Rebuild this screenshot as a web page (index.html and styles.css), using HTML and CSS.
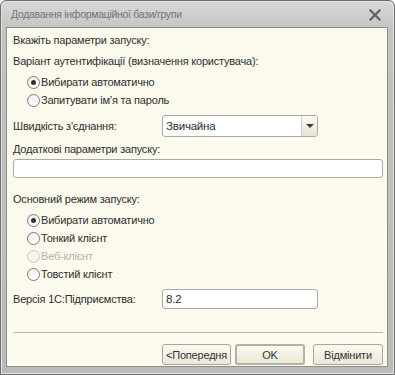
FILE: index.html
```html
<!DOCTYPE html>
<html lang="uk">
<head>
  <meta charset="UTF-8">
  <title>Додавання інформаційної бази/групи</title>
  <link rel="stylesheet" href="styles.css">
</head>
<body>

  <div class="window">
    <div class="title-bar">
      <span class="title">Додавання інформаційної бази/групи</span>
      <svg class="close" width="12" height="12" viewBox="0 0 12 12">
        <path d="M1.5 1.5 L10.5 10.5 M10.5 1.5 L1.5 10.5" stroke="#606060" stroke-width="2.2" stroke-linecap="square"/>
      </svg>
    </div>

    <div class="content">
      <div class="line hint">Вкажіть параметри запуску:</div>
      <div class="line auth-label">Варіант аутентифікації (визначення користувача):</div>

      <label class="radio first"><span class="dot checked"></span>Вибирати автоматично</label>
      <label class="radio"><span class="dot"></span>Запитувати ім’я та пароль</label>

      <div class="field speed">
        <span class="field-label">Швидкість з'єднання:</span>
        <div class="select">
          <span class="select-value">Звичайна</span>
          <span class="select-btn"><span class="arrow"></span></span>
        </div>
      </div>

      <div class="line extra-label">Додаткові параметри запуску:</div>
      <div class="input wide"></div>

      <div class="line mode-label">Основний режим запуску:</div>
      <label class="radio first"><span class="dot checked"></span>Вибирати автоматично</label>
      <label class="radio"><span class="dot"></span>Тонкий клієнт</label>
      <label class="radio disabled"><span class="dot"></span>Веб-клієнт</label>
      <label class="radio"><span class="dot"></span>Товстий клієнт</label>

      <div class="field version">
        <span class="field-label">Версія 1С:Підприємства:</span>
        <div class="input short">8.2</div>
      </div>

      <div class="separator"></div>

      <div class="buttons">
        <button class="btn prev">&lt;Попередня</button>
        <button class="btn ok">OK</button>
        <button class="btn cancel">Відмінити</button>
      </div>
    </div>
  </div>

</body>
</html>
```

FILE: styles.css
```css
body {
  margin: 0;
  width: 395px;
  height: 375px;
  overflow: hidden;
  background-color: #ffffff;
  font-family: "Liberation Sans", Arial, sans-serif;
  font-size: 11px;
  letter-spacing: -0.2px;
  color: #2e2e2e;
}

.window {
  box-sizing: border-box;
  width: 395px;
  height: 375px;
  display: flex;
  flex-direction: column;
  padding: 0 6px 7px 5px;
  border: 1px solid #6e6e6e;
  border-radius: 6px 6px 0 0;
  background: linear-gradient(#d9d9d9, #c2c2c2 30px, #bababa);
  box-shadow: inset 0 0 0 1px #e4e4e4;
}

.title-bar {
  height: 26px;
  display: flex;
  align-items: center;
  justify-content: space-between;
  padding: 0 7px 0 5px;
  flex-shrink: 0;
}

.title {
  font-size: 10.5px;
  letter-spacing: -0.3px;
  color: #747474;
}

.close {
  margin-top: 1px;
}

.content {
  flex: 1;
  display: flex;
  flex-direction: column;
  padding: 0 5px 0 6px;
  background-color: #fcfaec;
  border: 1px solid #8e8e8e;
}

.line {
  height: 18px;
  line-height: 18px;
  white-space: nowrap;
}

.hint {
  margin-top: 3px;
}

.auth-label {
  margin-top: 3px;
}

.radio {
  display: flex;
  align-items: center;
  height: 18px;
  padding-left: 14px;
  white-space: nowrap;
}

.radio.first {
  margin-top: 3px;
}

.radio.disabled {
  color: #b3b3b3;
}

.dot {
  position: relative;
  box-sizing: border-box;
  width: 13px;
  height: 13px;
  margin-right: 1px;
  border: 1px solid #7a7a7a;
  border-radius: 50%;
  background: linear-gradient(135deg, #e8e8e8, #ffffff 70%);
}

.radio.disabled .dot {
  border-color: #cccccc;
  background: #f6f4e8;
}

.dot.checked::after {
  content: "";
  position: absolute;
  left: 3px;
  top: 3px;
  width: 5px;
  height: 5px;
  border-radius: 50%;
  background-color: #333333;
}

.field {
  display: flex;
  align-items: center;
}

.field-label {
  width: 149px;
  flex-shrink: 0;
  white-space: nowrap;
}

.speed {
  margin-top: 6px;
  height: 22px;
}

.select {
  box-sizing: border-box;
  width: 156px;
  height: 22px;
  display: flex;
  border: 1px solid #a9a9a9;
  border-radius: 3px;
  background-color: #ffffff;
}

.select-value {
  flex: 1;
  padding-left: 3px;
  line-height: 20px;
  font-size: 11.5px;
}

.select-btn {
  width: 15px;
  display: flex;
  align-items: center;
  justify-content: center;
  border-left: 1px solid #cfcfcf;
  border-radius: 0 2px 2px 0;
  background: linear-gradient(#fbfaf3, #e7e4d6);
}

.arrow {
  width: 0;
  height: 0;
  border-left: 4px solid transparent;
  border-right: 4px solid transparent;
  border-top: 4px solid #3a3a3a;
}

.extra-label {
  margin-top: 3px;
}

.input {
  box-sizing: border-box;
  height: 19px;
  border: 1px solid #a9a9a9;
  border-radius: 3px;
  background-color: #ffffff;
  line-height: 17px;
  padding-left: 3px;
}

.input.wide {
  margin-top: 1px;
  width: 370px;
}

.mode-label {
  margin-top: 12px;
}

.version {
  margin-top: 6px;
  height: 20px;
}

.input.short {
  width: 156px;
  height: 20px;
  line-height: 18px;
  font-size: 11.5px;
}

.separator {
  margin-top: 23px;
  width: 370px;
  height: 1px;
  background-color: #b9b7ab;
}

.buttons {
  margin-top: 11px;
  width: 370px;
  display: flex;
  justify-content: flex-end;
  gap: 4px;
}

.btn {
  box-sizing: border-box;
  height: 21px;
  width: 70px;
  padding: 0;
  font-family: inherit;
  font-size: 11px;
  letter-spacing: -0.2px;
  color: #333333;
  border: 1px solid #a8a69c;
  border-radius: 3px;
  background: linear-gradient(#fbfaf2, #ebe8d8);
}

.btn.prev {
  width: 69px;
}

.btn.ok {
  border: 2px solid #b4b1a3;
}

.btn.cancel {
  margin-left: 4px;
}
```
